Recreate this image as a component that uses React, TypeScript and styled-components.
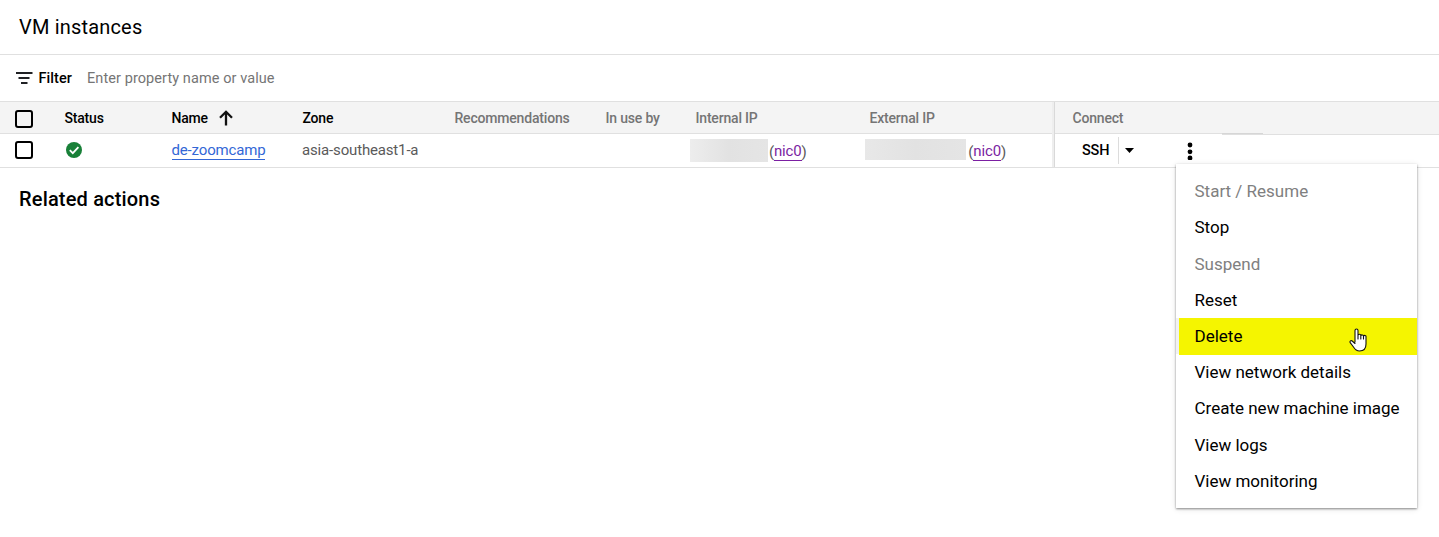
import React from "react";
import styled, { createGlobalStyle } from "styled-components";

const GlobalStyle = createGlobalStyle`
  * { box-sizing: border-box; }
  body { margin: 0; background: #fff; font-family: Roboto, sans-serif; color: #000; overflow: hidden; }
`;

const Page = styled.main`
  position: relative;
  width: 1439px;
  height: 537px;
  overflow: hidden;
`;

const TitleBar = styled.header`
  height: 55px;
  padding-left: 19px;
  border-bottom: 1px solid #e0e0e0;
  display: flex;
  align-items: center;
`;

const Title = styled.h1`
  margin: 0;
  font-size: 20px;
  font-weight: 400;
  line-height: 24px;
  letter-spacing: 0.18px;
`;

const FilterBar = styled.div`
  height: 47px;
  padding-left: 16px;
  border-bottom: 1px solid #e0e0e0;
  display: flex;
  align-items: center;
  font-size: 14.5px;
`;

const FilterLabel = styled.span`
  width: 48.5px;
  margin-left: 5.5px;
  font-weight: 500;
  letter-spacing: 0.05px;
`;

const FilterHint = styled.span`
  color: #757575;
  white-space: nowrap;
  letter-spacing: 0.08px;
`;

const Row = styled.div<{ $head?: boolean }>`
  display: grid;
  grid-template-columns: 64px 107px 131px 152px 151px 91px 174px 182px 387px;
  height: ${(p) => (p.$head ? 32 : 34)}px;
  background: ${(p) => (p.$head ? "#f4f4f4" : "#fff")};
  border-bottom: 1px solid #e0e0e0;
`;

const Cell = styled.div<{ $strong?: boolean }>`
  display: flex;
  align-items: center;
  white-space: nowrap;
  font-size: 14px;
  font-weight: 500;
  letter-spacing: -0.19px;
  padding-left: 0.5px;
  color: ${(p) => (p.$strong ? "#000" : "#757575")};
`;

const IpHead = styled(Cell)`
  padding: 0;
  margin-left: -0.5px;
`;

const DataCell = styled(Cell)`
  font-size: 15px;
  font-weight: 400;
  letter-spacing: -0.16px;
  padding: 0 0 1px;
  color: #5a5a5a;
`;

const SortArrow = styled.svg`
  margin-left: 10px;
`;

const Checkbox = styled.span<{ $drop?: boolean }>`
  width: 18px;
  height: 18px;
  margin-left: 14.5px;
  margin-top: ${(p) => (p.$drop ? 2 : 0)}px;
  border: 2px solid #000;
  border-radius: 3px;
`;

const Link = styled.a<{ $visited?: boolean }>`
  color: ${(p) => (p.$visited ? "#7b1fa2" : "#3367d6")};
  border-bottom: 1px solid currentColor;
  line-height: 18px;
`;

const NameLink = styled(Link)`
  margin-top: 1px;
  margin-left: 0.5px;
`;

const Address = styled(DataCell)<{ $shift?: number }>`
  padding: 2px 0 0;
  margin-left: ${(p) => -6 + (p.$shift ?? 0)}px;
`;

const Redacted = styled.span<{ $w: number; $h: number; $from: string }>`
  width: ${(p) => p.$w}px;
  height: ${(p) => p.$h}px;
  align-self: flex-start;
  margin: 3px 1px 0 0;
  background: linear-gradient(90deg, ${(p) => p.$from}, #e2e2e2 50%, #e5e5e5);
`;

const ConnectCell = styled(Cell)`
  border-left: 2px solid #eeeeee;
  box-shadow: inset 1px 0 #d9d9d9;
  padding-left: 18.5px;
`;

const ConnectHead = styled(ConnectCell)`
  height: 32px;
  margin-bottom: -1px;
  background:
    linear-gradient(90deg, #e0e0e0 168px, #d6d6d6 168px 209px, #f4f4f4 209px) 0 100% / 100% 1px no-repeat,
    #f4f4f4;
`;

const ConnectBody = styled(ConnectCell)`
  padding: 0 0 1px 28px;
  color: #000;
  font-size: 14.5px;
  background: linear-gradient(90deg, transparent 168px, #e0e0e0 168px) 0 0 / 100% 1px no-repeat;
`;

const SplitLine = styled.span`
  width: 1px;
  height: 27px;
  margin: 0 6px 0 9px;
  background: #dcdcdc;
`;

const Related = styled.h2`
  margin: 19px 0 0 19px;
  font-size: 20px;
  line-height: 24px;
  font-weight: 500;
  letter-spacing: 0.17px;
`;

const Menu = styled.ul`
  position: absolute;
  left: 1176px;
  top: 164px;
  width: 241px;
  height: 344px;
  margin: 0;
  padding: 9.12px 0 0;
  list-style: none;
  background: #fff;
  box-shadow: 0 1px 2px rgba(0, 0, 0, 0.42), 0 1px 6px rgba(0, 0, 0, 0.12);
`;

const MenuItem = styled.li<{ $disabled?: boolean; $active?: boolean }>`
  height: 36.2px;
  padding-left: 15.5px;
  border-left: 3px solid ${(p) => (p.$active ? "#f1f1f1" : "#fff")};
  display: flex;
  align-items: center;
  font-size: 17px;
  white-space: nowrap;
  color: ${(p) => (p.$disabled ? "#808080" : "#000")};
  background: ${(p) => (p.$active ? "#f5f500" : "transparent")};
  box-shadow: ${(p) => (p.$active ? "0 1px #f5f500" : "none")};
`;

const Pointer = styled.svg`
  position: absolute;
  left: 1349px;
  top: 328px;
`;

const items = [
  { label: "Start / Resume", disabled: true },
  { label: "Stop" },
  { label: "Suspend", disabled: true },
  { label: "Reset" },
  { label: "Delete", active: true },
  { label: "View network details" },
  { label: "Create new machine image" },
  { label: "View logs" },
  { label: "View monitoring" },
];

export default function App() {
  return (
    <Page>
      <GlobalStyle />
      <TitleBar><Title>VM instances</Title></TitleBar>
      <FilterBar>
        <svg width="17" height="12" viewBox="0 0 17 12" fill="#202124">
          <path d="M0 0h16.5v2H0zM2.5 5h11v2h-11zM5 10h6.5v2H5z" />
        </svg>
        <FilterLabel>Filter</FilterLabel>
        <FilterHint>Enter property name or value</FilterHint>
      </FilterBar>
      <Row $head>
        <Cell><Checkbox $drop /></Cell>
        <Cell $strong>Status</Cell>
        <Cell $strong>
          Name
          <SortArrow width="16" height="16" viewBox="0 0 16 16" fill="none" stroke="#111" strokeWidth="2.3">
            <path d="M8 15.5V2M2 7.8L8 1.8l6 6" />
          </SortArrow>
        </Cell>
        <Cell $strong>Zone</Cell>
        <Cell>Recommendations</Cell>
        <Cell>In use by</Cell>
        <IpHead>Internal IP</IpHead>
        <IpHead>External IP</IpHead>
        <ConnectHead>Connect</ConnectHead>
      </Row>
      <Row>
        <DataCell><Checkbox /></DataCell>
        <DataCell>
          <svg width="20" height="18" viewBox="0 0 20 18">
            <circle cx="10" cy="9" r="8" fill="#188038" />
            <path d="M5.8 9.2l3 3 5.6-6" fill="none" stroke="#fff" strokeWidth="1.8" />
          </svg>
        </DataCell>
        <DataCell><NameLink>de-zoomcamp</NameLink></DataCell>
        <DataCell>asia-southeast1-a</DataCell>
        <DataCell />
        <DataCell />
        <Address><Redacted $w={78} $h={23} $from="#ededed" />(<Link $visited>nic0</Link>)</Address>
        <Address $shift={1}><Redacted $w={101} $h={21} $from="#e8e8e8" />&#8202;(<Link $visited>nic0</Link>)</Address>
        <ConnectBody>
          SSH
          <SplitLine />
          <svg width="9" height="5" viewBox="0 0 9 5"><path d="M0 0h9L4.5 5z" /></svg>
          <svg width="112" height="20" viewBox="0 0 112 20">
            <circle cx="56" cy="5" r="2.4" /><circle cx="56" cy="11.8" r="2.4" /><circle cx="56" cy="18" r="2.4" />
          </svg>
        </ConnectBody>
      </Row>
      <Related>Related actions</Related>
      <Menu>
        {items.map((i) => (
          <MenuItem key={i.label} $disabled={i.disabled} $active={i.active}>{i.label}</MenuItem>
        ))}
      </Menu>
      <Pointer width="18" height="24" viewBox="0 0 18 24" fill="#fff" stroke="#111" strokeWidth="1.1" strokeLinejoin="round" strokeLinecap="round">
        <path d="M6 14V2.5a1.5 1.5 0 0 1 3 0V7.5a1.4 1.4 0 0 1 2.8.3 1.4 1.4 0 0 1 2.7.5 1.3 1.3 0 0 1 2.5.7V16c0 4-2 7-6.5 7-3 0-4.5-1.500-6-4L1.2 14.700c-.8-1.500.8-2.700 2-1.700L6 15.500M9 7.500V11M11.800 8v3M14.500 8.500V11" />
      </Pointer>
    </Page>
  );
}
